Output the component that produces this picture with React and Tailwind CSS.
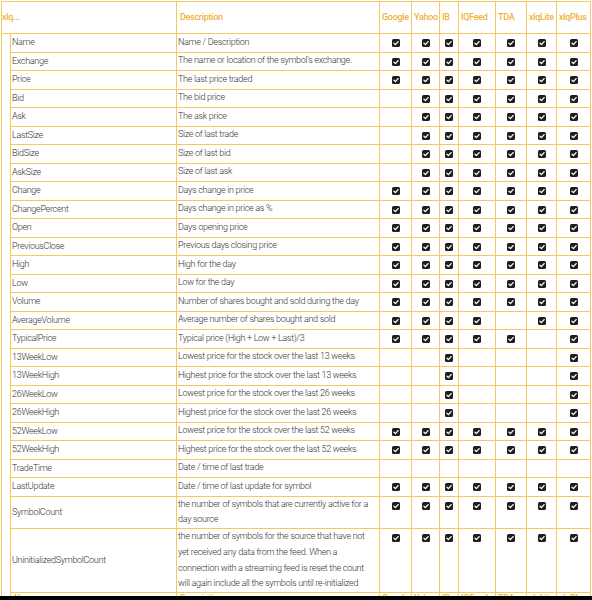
import React from "react";

const rows = [
  ["Name", "Name / Description", "1111111"],
  ["Exchange", "The name or location of the symbol's exchange.", "1111111"],
  ["Price", "The last price traded", "1111111"],
  ["Bid", "The bid price", "0111111"],
  ["Ask", "The ask price", "0111111"],
  ["LastSize", "Size of last trade", "0111111"],
  ["BidSize", "Size of last bid", "0111111"],
  ["AskSize", "Size of last ask", "0111111"],
  ["Change", "Days change in price", "1111111"],
  ["ChangePercent", "Days change in price as %", "1111111"],
  ["Open", "Days opening price", "1111111"],
  ["PreviousClose", "Previous days closing price", "1111111"],
  ["High", "High for the day", "1111111"],
  ["Low", "Low for the day", "1111111"],
  ["Volume", "Number of shares bought and sold during the day", "1111111"],
  ["AverageVolume", "Average number of shares bought and sold", "1111011"],
  ["TypicalPrice", "Typical price (High + Low + Last)/3", "1111101"],
  ["13WeekLow", "Lowest price for the stock over the last 13 weeks", "0010001"],
  ["13WeekHigh", "Highest price for the stock over the last 13 weeks", "0010001"],
  ["26WeekLow", "Lowest price for the stock over the last 26 weeks", "0010001"],
  ["26WeekHigh", "Highest price for the stock over the last 26 weeks", "0010001"],
  ["52WeekLow", "Lowest price for the stock over the last 52 weeks", "1111111"],
  ["52WeekHigh", "Highest price for the stock over the last 52 weeks", "1111111"],
  ["TradeTime", "Date / time of last trade", "0000000"],
  ["LastUpdate", "Date / time of last update for symbol", "1111111"],
  [
    "SymbolCount",
    ["the number of symbols that are currently active for a", "day source"],
    "1111111",
  ],
  [
    "UninitializedSymbolCount",
    [
      "the number of symbols for the source that have not",
      "yet received any data from the feed. When a",
      "connection with a streaming feed is reset the count",
      "will again include all the symbols until re-initialized",
    ],
    "1111111",
  ],
];

const heads = ["Google", "Yahoo", "IB", "IQFeed", "TDA", "xlqLite", "xlqPlus"];

function Check() {
  return (
    <svg width="8" height="8" viewBox="0 0 8 8" className="block">
      <rect x="0" y="0" width="8" height="8" rx="1.6" fill="#1e1e1e" />
      <path
        d="M1.9 4.1 L3.4 5.6 L6.1 2.6"
        fill="none"
        stroke="#fff"
        strokeWidth="1.3"
        strokeLinecap="round"
        strokeLinejoin="round"
      />
    </svg>
  );
}

export default function App() {
  const headCls =
    "bg-white flex items-center font-medium text-[#f1b13c] whitespace-nowrap overflow-visible";
  return (
    <div className="h-[600px] w-[592px] overflow-hidden bg-black font-[Roboto] text-[9px] tracking-[-0.3px]">
      <div className="h-[596px] overflow-hidden bg-white pt-px pl-px">
        <div className="grid w-max gap-px bg-[#f5c862] p-px grid-cols-[8px_165px_202px_31px_27px_18px_36px_30px_29px_33px] grid-rows-[31px_repeat(25,17.5px)_31.5px_63px_20px]">
          <div className={headCls + " col-span-2"}>xlq...</div>
          <div className={headCls + " pl-[3px]"}>Description</div>
          {heads.map((h) => (
            <div key={h} className={headCls + " pl-[2px]"}>
              {h}
            </div>
          ))}
          <div className="bg-white row-span-28"></div>
          {rows.map(([name, desc, flags]) => (
            <React.Fragment key={name}>
              <div className="bg-white flex items-center pl-px font-light text-[#333] whitespace-nowrap">
                {name}
              </div>
              <div className="bg-white flex items-center pl-px font-light text-[#333] whitespace-nowrap leading-[15.6px]">
                {Array.isArray(desc) ? (
                  <div>
                    {desc.map((l) => (
                      <div key={l}>{l}</div>
                    ))}
                  </div>
                ) : (
                  desc
                )}
              </div>
              {flags.split("").map((f, i) => (
                <div key={i} className="bg-white flex justify-center items-start pt-[5px]">
                  {f === "1" ? <Check /> : null}
                </div>
              ))}
            </React.Fragment>
          ))}
          <div className="bg-white pl-[3px] pt-px leading-none font-medium text-[#f1b13c]">
            Name
          </div>
          <div className="bg-white pl-[3px] pt-px leading-none font-medium text-[#f1b13c]">
            Description
          </div>
          {heads.map((h) => (
            <div
              key={"b" + h}
              className="bg-white pl-[2px] pt-px leading-none font-medium text-[#f1b13c] whitespace-nowrap"
            >
              {h}
            </div>
          ))}
        </div>
      </div>
      <div className="h-[4px] bg-black"></div>
    </div>
  );
}
